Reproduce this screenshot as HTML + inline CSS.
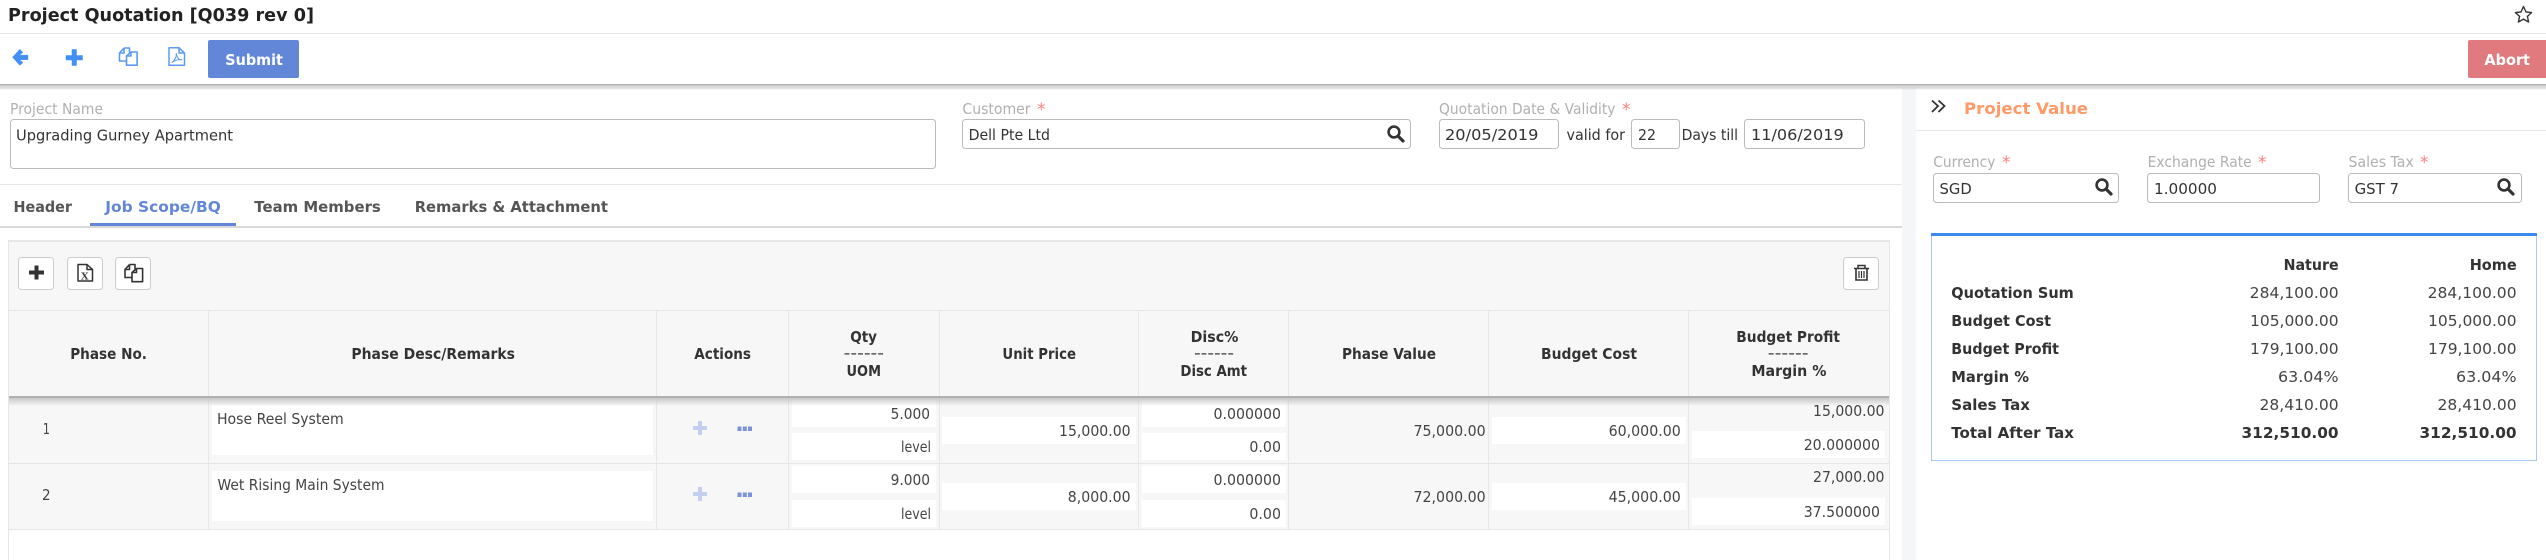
<!DOCTYPE html>
<html lang="en"><head><meta charset="utf-8"><title>Project Quotation</title>
<style>
html,body{margin:0;padding:0;background:#fff;width:2546px;height:560px;overflow:hidden}
svg{display:block}
text{font-family:"DejaVu Sans","Liberation Sans",sans-serif;font-size:15px;fill:#444}
.b{font-weight:bold;fill:#333}
.l{fill:#b0b0b0}
.i{fill:#333}
.s{fill:#ff8080;font-size:17px}
.c rect{shape-rendering:crispEdges}
</style></head><body>
<svg width="2546" height="560" viewBox="0 0 2546 560" xmlns="http://www.w3.org/2000/svg">
<defs>
<linearGradient id="sh" x1="0" y1="0" x2="0" y2="1"><stop offset="0" stop-color="#a8a8a8"/><stop offset=".35" stop-color="#d8d8d8"/><stop offset="1" stop-color="#a8a8a8" stop-opacity="0"/></linearGradient>
<linearGradient id="sh2" x1="0" y1="0" x2="0" y2="1"><stop offset="0" stop-color="#c8c8c8"/><stop offset="1" stop-color="#c8c8c8" stop-opacity="0"/></linearGradient>
<g id="mag"><circle cx="7" cy="7" r="5.4" fill="none" stroke="#333" stroke-width="2.6"/><path d="M11 11 L16 16" stroke="#333" stroke-width="3.2" stroke-linecap="round"/></g>
<g id="copy" fill="none" stroke-width="1.6" stroke-linejoin="round"><path d="M5.5 1 L1 6 V14 H7.5 M5.5 1 H11 V5.5 M5.5 1 V6 H1"/><path d="M8 9 L12.5 5 H18.6 V18.2 H8 Z M12.5 5 V9 H8"/></g>
</defs>

<g class="c">
<!-- page regions -->
<rect x="1902" y="84" width="14" height="476" fill="#f5f6f8"/>
<rect x="0" y="33" width="2546" height="1" fill="#e6e6e6"/>
<rect x="0" y="184" width="1902" height="1" fill="#e6e6e6"/>
<rect x="1916" y="130" width="630" height="1" fill="#e6e6e6"/>
<rect x="0" y="226" width="1902" height="2" fill="#d9d9d9"/>
<rect x="90" y="223" width="146" height="3" fill="#6287d8"/>
<!-- grid panel -->
<rect x="8" y="240" width="1882" height="320" fill="#fff"/>
<rect x="9" y="242" width="1880" height="287" fill="#f7f7f7"/>
<rect x="8" y="240" width="1882" height="2" fill="#e6e6e6"/>
<rect x="8" y="240" width="1" height="320" fill="#e6e6e6"/>
<rect x="1889" y="240" width="1" height="320" fill="#e6e6e6"/>
<rect x="9" y="310" width="1880" height="1" fill="#e6e6e6"/>
<rect x="9" y="463" width="1880" height="1" fill="#e6e6e6"/>
<rect x="9" y="529" width="1880" height="1" fill="#e6e6e6"/>
<rect x="208" y="310" width="1" height="219" fill="#e6e6e6"/>
<rect x="656" y="310" width="1" height="219" fill="#e6e6e6"/>
<rect x="788" y="310" width="1" height="219" fill="#e6e6e6"/>
<rect x="939" y="310" width="1" height="219" fill="#e6e6e6"/>
<rect x="1138" y="310" width="1" height="219" fill="#e6e6e6"/>
<rect x="1288" y="310" width="1" height="219" fill="#e6e6e6"/>
<rect x="1488" y="310" width="1" height="219" fill="#e6e6e6"/>
<rect x="1688" y="310" width="1" height="219" fill="#e6e6e6"/>
<!-- white cells row 1 -->
<rect x="212" y="405" width="441" height="50" fill="#fff"/>
<rect x="792" y="400" width="144" height="27" fill="#fff"/>
<rect x="792" y="433" width="144" height="27" fill="#fff"/>
<rect x="942" y="417" width="194" height="27" fill="#fff"/>
<rect x="1142" y="400" width="144" height="27" fill="#fff"/>
<rect x="1142" y="433" width="144" height="27" fill="#fff"/>
<rect x="1492" y="417" width="194" height="27" fill="#fff"/>
<rect x="1692" y="431" width="193" height="27" fill="#fff"/>
<!-- white cells row 2 -->
<rect x="212" y="471" width="441" height="50" fill="#fff"/>
<rect x="792" y="466" width="144" height="27" fill="#fff"/>
<rect x="792" y="500" width="144" height="27" fill="#fff"/>
<rect x="942" y="483" width="194" height="27" fill="#fff"/>
<rect x="1142" y="466" width="144" height="27" fill="#fff"/>
<rect x="1142" y="500" width="144" height="27" fill="#fff"/>
<rect x="1492" y="483" width="194" height="27" fill="#fff"/>
<rect x="1692" y="498" width="193" height="27" fill="#fff"/>
<!-- header row shadow -->
<rect x="9" y="396" width="1880" height="2" fill="#b0b0b0"/>
<rect x="9" y="398" width="1880" height="8" fill="url(#sh2)"/>
<!-- toolbar shadow -->
<rect x="0" y="84" width="2546" height="6" fill="url(#sh)"/>
</g>

<!-- top bar -->
<text class="b" x="8" y="21" font-size="18" style="font-size:18px;fill:#222" textLength="306" lengthAdjust="spacingAndGlyphs">Project Quotation [Q039 rev 0]</text>
<path d="M2523.5 6.5 L2526 12 L2531.6 12.6 L2527.4 16.4 L2528.6 22 L2523.5 19.1 L2518.4 22 L2519.6 16.4 L2515.4 12.6 L2521 12 Z" fill="none" stroke="#333" stroke-width="1.4" stroke-linejoin="round"/>

<!-- toolbar icons -->
<path d="M12.5 57.2 L19.8 49.3 L23 52.4 L19.6 55.1 H28 V59.7 H19.6 L23 62.5 L19.8 65.4 Z" fill="#4390f5" stroke="#4390f5" stroke-width=".4" stroke-linejoin="round"/>
<path d="M72 49.5 h4.5 v6 h6 v4.5 h-6 v5.5 h-4.5 v-5.5 h-6 v-4.5 h6 Z" fill="#4390f5" stroke="#4390f5" stroke-width=".5" stroke-linejoin="round"/>
<use href="#copy" x="118.5" y="47" stroke="#5b9af5"/>
<g fill="none" stroke="#5b9af5" stroke-width="1.5" stroke-linejoin="round"><path d="M169 47.8 H179 L184.5 53 V65.2 H169 Z M179 47.8 V53 H184.5"/><path d="M172 62.5 C175 60 176.5 56.5 176.3 53.5 C176.6 57 179 60 182 59.7 C178.5 59.5 174.5 60.5 172 62.5 Z" stroke-width="1"/></g>

<rect x="208" y="40" width="91" height="38" rx="2" fill="#6287d8"/>
<text x="225.3" y="65" style="font-weight:bold;fill:#fff;font-size:15px" textLength="57.6" lengthAdjust="spacingAndGlyphs">Submit</text>
<path d="M2470 40 H2546 V78 H2470 Q2468 78 2468 76 V42 Q2468 40 2470 40 Z" fill="#e07a7e"/>
<text x="2484.4" y="65" style="font-weight:bold;fill:#fff;font-size:15px" textLength="45.6" lengthAdjust="spacingAndGlyphs">Abort</text>

<!-- header form -->
<text class="l" x="10" y="114" textLength="93" lengthAdjust="spacingAndGlyphs">Project Name</text>
<rect x="10.5" y="119.5" width="925" height="49" rx="3" fill="#fff" stroke="#bbb"/>
<text class="i" x="16" y="140.5" textLength="217" lengthAdjust="spacingAndGlyphs">Upgrading Gurney Apartment</text>

<text class="l" x="962.4" y="114" textLength="68.2" lengthAdjust="spacingAndGlyphs">Customer</text><text class="s" x="1037" y="115">*</text>
<rect x="962.5" y="119.5" width="448" height="29" rx="3" fill="#fff" stroke="#bbb"/>
<text class="i" x="968.6" y="140" textLength="81.4" lengthAdjust="spacingAndGlyphs">Dell Pte Ltd</text>
<use href="#mag" x="1387" y="125"/>

<text class="l" x="1439" y="114" textLength="176.5" lengthAdjust="spacingAndGlyphs">Quotation Date &amp; Validity</text><text class="s" x="1622" y="115">*</text>
<rect x="1439.5" y="119.5" width="119" height="29" rx="3" fill="#fff" stroke="#bbb"/>
<text class="i" x="1445" y="140" textLength="93.4" lengthAdjust="spacingAndGlyphs">20/05/2019</text>
<text class="i" x="1566.5" y="140" textLength="58.5" lengthAdjust="spacingAndGlyphs">valid for</text>
<rect x="1631.5" y="119.5" width="48" height="29" rx="3" fill="#fff" stroke="#bbb"/>
<text class="i" x="1638" y="140" textLength="18" lengthAdjust="spacingAndGlyphs">22</text>
<text class="i" x="1681.6" y="140" textLength="56.4" lengthAdjust="spacingAndGlyphs">Days till</text>
<rect x="1744.5" y="119.5" width="120" height="29" rx="3" fill="#fff" stroke="#bbb"/>
<text class="i" x="1751" y="140" textLength="92.7" lengthAdjust="spacingAndGlyphs">11/06/2019</text>

<!-- tabs -->
<g style="font-weight:bold">
<text x="13.5" y="212" style="font-weight:bold;fill:#555" textLength="58.5" lengthAdjust="spacingAndGlyphs">Header</text>
<text x="105.3" y="212" style="font-weight:bold;fill:#6287d8" textLength="115.5" lengthAdjust="spacingAndGlyphs">Job Scope/BQ</text>
<text x="254.3" y="212" style="font-weight:bold;fill:#555" textLength="126.5" lengthAdjust="spacingAndGlyphs">Team Members</text>
<text x="414.7" y="212" style="font-weight:bold;fill:#555" textLength="193.3" lengthAdjust="spacingAndGlyphs">Remarks &amp; Attachment</text>
</g>

<!-- grid toolbar -->
<g fill="#fff" stroke="#ccc">
<rect x="18.5" y="257.5" width="35" height="32" rx="3"/>
<rect x="67.5" y="257.5" width="35" height="32" rx="3"/>
<rect x="115.5" y="257.5" width="35" height="32" rx="3"/>
<rect x="1843.5" y="257.5" width="35" height="32" rx="3"/>
</g>
<path d="M34.5 265.5 h4 v5 h5.5 v4 h-5.5 v5 h-4 v-5 h-5.5 v-4 h5.5 Z" fill="#333"/>
<path d="M78 264.5 H87 L92.5 269.5 V281 H78 Z M87 264.5 V269.5 H92.5" fill="none" stroke="#333" stroke-width="1.5" stroke-linejoin="round"/>
<text x="80.8" y="279.5" style="font-family:'Liberation Serif',serif;font-weight:bold;font-size:11px;fill:#333">X</text>
<use href="#copy" x="124" y="263.5" stroke="#333"/>
<g fill="none" stroke="#333"><path d="M1854 268.5 H1869 M1858 268 V265.5 H1865 V268" stroke-width="1.5"/><path d="M1856 268.5 V280 H1867 V268.5" stroke-width="1.6"/><path d="M1859 271 V278 M1861.5 271 V278 M1864 271 V278" stroke-width="1.2"/></g>

<!-- table header -->
<text class="b" x="70.2" y="359" textLength="76.8" lengthAdjust="spacingAndGlyphs">Phase No.</text>
<text class="b" x="351.4" y="359" textLength="163.6" lengthAdjust="spacingAndGlyphs">Phase Desc/Remarks</text>
<text class="b" x="694.3" y="359" textLength="56.7" lengthAdjust="spacingAndGlyphs">Actions</text>
<text class="b" x="850.2" y="342" textLength="26.8" lengthAdjust="spacingAndGlyphs">Qty</text>
<text class="b" x="843.7" y="358" style="font-weight:normal" textLength="40.3" lengthAdjust="spacingAndGlyphs">------</text>
<text class="b" x="846.5" y="376" textLength="34.5" lengthAdjust="spacingAndGlyphs">UOM</text>
<text class="b" x="1002.4" y="359" textLength="73.6" lengthAdjust="spacingAndGlyphs">Unit Price</text>
<text class="b" x="1190.6" y="342" textLength="47.8" lengthAdjust="spacingAndGlyphs">Disc%</text>
<text class="b" x="1194" y="358" style="font-weight:normal" textLength="40" lengthAdjust="spacingAndGlyphs">------</text>
<text class="b" x="1180.4" y="376" textLength="66.6" lengthAdjust="spacingAndGlyphs">Disc Amt</text>
<text class="b" x="1342" y="359" textLength="94" lengthAdjust="spacingAndGlyphs">Phase Value</text>
<text class="b" x="1541" y="359" textLength="96" lengthAdjust="spacingAndGlyphs">Budget Cost</text>
<text class="b" x="1736.3" y="342" textLength="103.7" lengthAdjust="spacingAndGlyphs">Budget Profit</text>
<text class="b" x="1767.8" y="358" style="font-weight:normal" textLength="40.8" lengthAdjust="spacingAndGlyphs">------</text>
<text class="b" x="1751.4" y="376" textLength="75.1" lengthAdjust="spacingAndGlyphs">Margin %</text>

<!-- row 1 -->
<text x="42.9" y="434" textLength="7" lengthAdjust="spacingAndGlyphs">1</text>
<text x="217" y="424" textLength="126.7" lengthAdjust="spacingAndGlyphs">Hose Reel System</text>
<path d="M698 421 h4 v5 h5 v4 h-5 v5 h-4 v-5 h-5 v-4 h5 Z" fill="#c3cff0"/>
<path d="M737.5 426.5 h4 v4.5 h-4 Z M742.8 426.5 h4 v4.5 h-4 Z M748 426.5 h4 v4.5 h-4 Z" fill="#7b93dd"/>
<text x="890.6" y="419" textLength="39.4" lengthAdjust="spacingAndGlyphs">5.000</text>
<text x="901" y="452" textLength="30" lengthAdjust="spacingAndGlyphs">level</text>
<text x="1059" y="436" textLength="71.6" lengthAdjust="spacingAndGlyphs">15,000.00</text>
<text x="1213.5" y="419" textLength="67.5" lengthAdjust="spacingAndGlyphs">0.000000</text>
<text x="1249.4" y="452" textLength="31.6" lengthAdjust="spacingAndGlyphs">0.00</text>
<text x="1413.5" y="436" textLength="72.2" lengthAdjust="spacingAndGlyphs">75,000.00</text>
<text x="1608.6" y="436" textLength="72.2" lengthAdjust="spacingAndGlyphs">60,000.00</text>
<text x="1813" y="416" textLength="71.5" lengthAdjust="spacingAndGlyphs">15,000.00</text>
<text x="1803.7" y="450" textLength="76.3" lengthAdjust="spacingAndGlyphs">20.000000</text>

<!-- row 2 -->
<text x="42" y="500" textLength="8.6" lengthAdjust="spacingAndGlyphs">2</text>
<text x="217.5" y="490" textLength="167" lengthAdjust="spacingAndGlyphs">Wet Rising Main System</text>
<path d="M698 487 h4 v5 h5 v4 h-5 v5 h-4 v-5 h-5 v-4 h5 Z" fill="#c3cff0"/>
<path d="M737.5 492.5 h4 v4.5 h-4 Z M742.8 492.5 h4 v4.5 h-4 Z M748 492.5 h4 v4.5 h-4 Z" fill="#7b93dd"/>
<text x="890.6" y="485" textLength="39.4" lengthAdjust="spacingAndGlyphs">9.000</text>
<text x="901" y="519" textLength="30" lengthAdjust="spacingAndGlyphs">level</text>
<text x="1067.8" y="502" textLength="62.8" lengthAdjust="spacingAndGlyphs">8,000.00</text>
<text x="1213.5" y="485" textLength="67.5" lengthAdjust="spacingAndGlyphs">0.000000</text>
<text x="1249.4" y="519" textLength="31.6" lengthAdjust="spacingAndGlyphs">0.00</text>
<text x="1413.5" y="502" textLength="72.2" lengthAdjust="spacingAndGlyphs">72,000.00</text>
<text x="1608.6" y="502" textLength="72.2" lengthAdjust="spacingAndGlyphs">45,000.00</text>
<text x="1813" y="482" textLength="71.5" lengthAdjust="spacingAndGlyphs">27,000.00</text>
<text x="1803.7" y="517" textLength="76.3" lengthAdjust="spacingAndGlyphs">37.500000</text>

<!-- right panel -->
<path d="M1932 100.5 L1938 106 L1932 112 M1938.5 100.5 L1944.5 106 L1938.5 112" fill="none" stroke="#333" stroke-width="1.8"/>
<text x="1964" y="114" style="font-weight:bold;font-size:16px;fill:#ff9a66" textLength="124" lengthAdjust="spacingAndGlyphs">Project Value</text>

<text class="l" x="1933.3" y="167" textLength="62.1" lengthAdjust="spacingAndGlyphs">Currency</text><text class="s" x="2002" y="168">*</text>
<text class="l" x="2147.6" y="167" textLength="104.1" lengthAdjust="spacingAndGlyphs">Exchange Rate</text><text class="s" x="2258" y="168">*</text>
<text class="l" x="2348.5" y="167" textLength="65.3" lengthAdjust="spacingAndGlyphs">Sales Tax</text><text class="s" x="2420" y="168">*</text>
<rect x="1933.5" y="173.5" width="185" height="29" rx="3" fill="#fff" stroke="#bbb"/>
<rect x="2147.5" y="173.5" width="172" height="29" rx="3" fill="#fff" stroke="#bbb"/>
<rect x="2348.5" y="173.5" width="173" height="29" rx="3" fill="#fff" stroke="#bbb"/>
<text class="i" x="1939.5" y="194" textLength="32.2" lengthAdjust="spacingAndGlyphs">SGD</text>
<text class="i" x="2154" y="194" textLength="63" lengthAdjust="spacingAndGlyphs">1.00000</text>
<text class="i" x="2354.6" y="194" textLength="44.4" lengthAdjust="spacingAndGlyphs">GST 7</text>
<use href="#mag" x="2095" y="178"/>
<use href="#mag" x="2497" y="178"/>

<!-- summary box -->
<rect x="1931.5" y="234.5" width="605" height="226" fill="#fff" stroke="#a8c8f8"/>
<rect x="1931" y="233" width="606" height="3" fill="#3d8bf2" shape-rendering="crispEdges"/>

<text class="b" x="2283.6" y="270" textLength="55" lengthAdjust="spacingAndGlyphs">Nature</text>
<text class="b" x="2469.7" y="270" textLength="47" lengthAdjust="spacingAndGlyphs">Home</text>

<text class="b" x="1951.3" y="298" textLength="122.5" lengthAdjust="spacingAndGlyphs">Quotation Sum</text>
<text x="2249.7" y="298" textLength="88.9" lengthAdjust="spacingAndGlyphs">284,100.00</text>
<text x="2427.6" y="298" textLength="89" lengthAdjust="spacingAndGlyphs">284,100.00</text>

<text class="b" x="1951.3" y="326" textLength="99.7" lengthAdjust="spacingAndGlyphs">Budget Cost</text>
<text x="2250" y="326" textLength="88.6" lengthAdjust="spacingAndGlyphs">105,000.00</text>
<text x="2428" y="326" textLength="88.6" lengthAdjust="spacingAndGlyphs">105,000.00</text>

<text class="b" x="1951.3" y="354" textLength="107.7" lengthAdjust="spacingAndGlyphs">Budget Profit</text>
<text x="2250" y="354" textLength="88.6" lengthAdjust="spacingAndGlyphs">179,100.00</text>
<text x="2428" y="354" textLength="88.6" lengthAdjust="spacingAndGlyphs">179,100.00</text>

<text class="b" x="1951.3" y="382" textLength="77.7" lengthAdjust="spacingAndGlyphs">Margin %</text>
<text x="2278" y="382" textLength="60.6" lengthAdjust="spacingAndGlyphs">63.04%</text>
<text x="2456" y="382" textLength="60.6" lengthAdjust="spacingAndGlyphs">63.04%</text>

<text class="b" x="1951.3" y="410" textLength="78.7" lengthAdjust="spacingAndGlyphs">Sales Tax</text>
<text x="2259.5" y="410" textLength="79.1" lengthAdjust="spacingAndGlyphs">28,410.00</text>
<text x="2437.5" y="410" textLength="79.1" lengthAdjust="spacingAndGlyphs">28,410.00</text>

<text class="b" x="1951.3" y="438" textLength="122.7" lengthAdjust="spacingAndGlyphs">Total After Tax</text>
<text class="b" x="2241.5" y="438" textLength="97.1" lengthAdjust="spacingAndGlyphs">312,510.00</text>
<text class="b" x="2419.5" y="438" textLength="97.1" lengthAdjust="spacingAndGlyphs">312,510.00</text>
</svg>
</body></html>
